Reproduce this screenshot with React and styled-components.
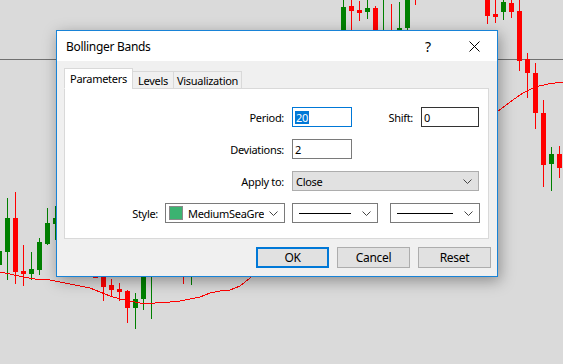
import React from "react";
import styled, { createGlobalStyle } from "styled-components";

const GlobalStyle = createGlobalStyle`
  body {
    margin: 0;
    background: #dadada;
    font-family: "Noto Sans", "Open Sans", sans-serif;
  }
`;

const Desktop = styled.div`
  position: relative;
  width: 563px;
  height: 364px;
  overflow: hidden;
  background: #dadada;
`;

const Chart = styled.svg`
  display: block;
`;

const Dialog = styled.div`
  position: absolute;
  left: 56px;
  top: 30px;
  width: 442px;
  height: 247px;
  box-sizing: border-box;
  border: 1px solid #1883d7;
  background: #f0f0f0;
  box-shadow: 2px 4px 14px rgba(0, 0, 0, 0.35);
  display: flex;
  flex-direction: column;
  font-size: 11px;
  letter-spacing: -0.3px;
  color: #000;
`;

const TitleBar = styled.div`
  height: 30px;
  flex: none;
  background: #fff;
  display: flex;
  align-items: center;
  padding-left: 9px;
`;

const Title = styled.span`
  flex: 1;
  font-size: 12px;
`;

const TitleButton = styled.div`
  width: 46px;
  height: 30px;
  display: flex;
  align-items: center;
  justify-content: center;
  font-size: 14px;
`;

const Client = styled.div`
  flex: 1;
  padding: 7px 6px 0 7px;
  display: flex;
  flex-direction: column;
`;

const TabStrip = styled.div`
  display: flex;
  align-items: flex-end;
  height: 21px;
  margin-bottom: -1px;
  position: relative;
  z-index: 1;
`;

const Tab = styled.div`
  box-sizing: border-box;
  height: ${(p) => (p.$active ? 21 : 18)}px;
  width: ${(p) => p.$w}px;
  margin-left: ${(p) => (p.$first ? 0 : -1)}px;
  border: 1px solid #d9d9d9;
  border-bottom-color: ${(p) => (p.$active ? "#fff" : "#d9d9d9")};
  background: ${(p) => (p.$active ? "#fff" : "#f0f0f0")};
  display: flex;
  align-items: center;
  justify-content: center;
  padding-top: ${(p) => (p.$active ? 0 : 1)}px;
`;

const Panel = styled.div`
  box-sizing: border-box;
  width: 425px;
  height: 151px;
  background: #fff;
  border: 1px solid #d9d9d9;
  padding-top: 18px;
  display: flex;
  flex-direction: column;
  gap: 12px;
`;

const Row = styled.div`
  display: flex;
  align-items: center;
  height: 20px;
  gap: ${(p) => p.$gap || 8}px;
`;

const Label = styled.div`
  width: ${(p) => p.$w}px;
  text-align: right;
  white-space: nowrap;
`;

const Field = styled.div`
  box-sizing: border-box;
  width: ${(p) => p.$w}px;
  height: 20px;
  border: 1px solid ${(p) => p.$border || "#7a7a7a"};
  background: #fff;
  display: flex;
  align-items: center;
  padding: 0 2px;
`;

const Selected = styled.span`
  background: #0078d7;
  color: #fff;
  line-height: 13px;
  padding: 0 1px;
`;

const Combo = styled.div`
  box-sizing: border-box;
  width: ${(p) => p.$w}px;
  height: 20px;
  margin-left: ${(p) => p.$ml || 0}px;
  border: 1px solid ${(p) => (p.$flat ? "#adadad" : "#7a7a7a")};
  background: ${(p) => (p.$flat ? "#e1e1e1" : "#fff")};
  display: flex;
  align-items: center;
  padding: 0 6px 0 3px;
  gap: 5px;
`;

const ComboText = styled.span`
  flex: 1;
  white-space: nowrap;
  overflow: hidden;
`;

const Swatch = styled.span`
  box-sizing: border-box;
  width: 14px;
  height: 14px;
  flex: none;
  background: #3cb371;
  border: 1px solid #8a8a8a;
`;

const LineSample = styled.span`
  flex: 1;
  height: 1px;
  background: #000;
  margin: 0 6px 0 3px;
`;

const ButtonRow = styled.div`
  display: flex;
  justify-content: flex-end;
  gap: 8px;
  margin-top: 8px;
`;

const Button = styled.div`
  box-sizing: border-box;
  width: 73px;
  height: 21px;
  border: ${(p) => (p.$default ? "2px solid #0078d7" : "1px solid #adadad")};
  background: #e1e1e1;
  display: flex;
  align-items: center;
  justify-content: center;
  font-size: 12px;
`;

const Chevron = () => (
  <svg width="9" height="5" viewBox="0 0 9 5">
    <polyline points="0.5,0.5 4.5,4.5 8.5,0.5" fill="none" stroke="#444" strokeWidth="1" />
  </svg>
);

const CloseIcon = () => (
  <svg width="11" height="11" viewBox="0 0 11 11">
    <path d="M0.5 0.5 L10.5 10.5 M10.5 0.5 L0.5 10.5" stroke="#000" strokeWidth="1" />
  </svg>
);

// left, wickTop, wickBottom, bodyTop, bodyBottom, up
const candles = [
  [341, 0, 30, 7, 30, 1],
  [349, 0, 30, 6, 11, 0],
  [357, 1, 21, 10, 13, 0],
  [365, 0, 19, 8, 12, 1],
  [373, 6, 30, 8, 30, 0],
  [381, 0, 30, null, null, 1],
  [389, 4, 30, null, null, 0],
  [397, 2, 30, 28, 30, 1],
  [405, 0, 30, 0, 28, 1],
  [413, 0, 5, null, null, 0],
  [485, 0, 24, 0, 16, 0],
  [493, 0, 23, 14, 17, 0],
  [501, 0, 20, 2, 12, 1],
  [509, 0, 18, 3, 12, 0],
  [517, 0, 71, 11, 61, 0],
  [525, 53, 98, 59, 73, 0],
  [533, 63, 129, 73, 113, 0],
  [541, 100, 187, 113, 165, 0],
  [549, 147, 191, 154, 164, 1],
  [557, 146, 178, 154, 168, 0],
  [-3, 240, 270, 251, 265, 1],
  [5, 198, 280, 218, 252, 1],
  [13, 192, 284, 218, 272, 0],
  [21, 245, 286, 271, 274, 0],
  [29, 252, 280, 269, 274, 1],
  [37, 238, 275, 242, 270, 1],
  [45, 208, 245, 223, 244, 1],
  [53, 206, 240, 218, 224, 1],
  [93, 270, 278, 270, 278, 0],
  [101, 270, 301, 270, 287, 0],
  [109, 279, 297, 285, 290, 0],
  [117, 283, 301, 289, 292, 0],
  [125, 290, 323, 291, 308, 0],
  [133, 293, 329, 299, 308, 1],
  [141, 270, 310, 270, 299, 1],
  [149, 270, 319, null, null, 1],
  [181, 270, 284, null, null, 0],
  [189, 270, 285, null, null, 1],
];

const maPoints =
  "0,272 10,274 23,277 35,279 50,280 60,282 70,284 80,286 90,288 100,292 110,296 120,299 130,301 140,303 150,304 160,302 170,302 180,301 190,299 200,297 210,293 220,291 230,290 240,286 250,278 260,270 497,112 510,102 523,93 535,87 548,84 563,82";

function PriceChart() {
  return (
    <Chart width="563" height="364" viewBox="0 0 563 364" shapeRendering="crispEdges">
      <rect x="0" y="59" width="563" height="1" fill="#707070" />
      {candles.map(([x, wt, wb, bt, bb, up], i) => {
        const color = up ? "#008000" : "#ff0000";
        return (
          <g key={i} fill={color}>
            <rect x={x + 2} y={wt} width="1" height={wb - wt} />
            {bt !== null && <rect x={x} y={bt} width="5" height={Math.max(1, bb - bt)} />}
          </g>
        );
      })}
      <polyline points={maPoints} fill="none" stroke="#ff0000" strokeWidth="1" />
    </Chart>
  );
}

export default function App() {
  return (
    <>
      <GlobalStyle />
      <Desktop>
        <PriceChart />
        <Dialog>
          <TitleBar>
            <Title>Bollinger Bands</Title>
            <TitleButton>?</TitleButton>
            <TitleButton>
              <CloseIcon />
            </TitleButton>
          </TitleBar>
          <Client>
            <TabStrip>
              <Tab $active $first $w={69}>Parameters</Tab>
              <Tab $w={42}>Levels</Tab>
              <Tab $w={69}>Visualization</Tab>
            </TabStrip>
            <Panel>
              <Row>
                <Label $w={219}>Period:</Label>
                <Field $w={60} $border="#0078d7">
                  <Selected>20</Selected>
                </Field>
                <Label $w={53}>Shift:</Label>
                <Field $w={58} $border="#333">0</Field>
              </Row>
              <Row>
                <Label $w={219}>Deviations:</Label>
                <Field $w={60}>2</Field>
              </Row>
              <Row>
                <Label $w={219}>Apply to:</Label>
                <Combo $w={187} $flat>
                  <ComboText>Close</ComboText>
                  <Chevron />
                </Combo>
              </Row>
              <Row $gap={7}>
                <Label $w={93}>Style:</Label>
                <Combo $w={120}>
                  <Swatch />
                  <ComboText>MediumSeaGre</ComboText>
                  <Chevron />
                </Combo>
                <Combo $w={86}>
                  <LineSample />
                  <Chevron />
                </Combo>
                <Combo $w={90} $ml={5}>
                  <LineSample />
                  <Chevron />
                </Combo>
              </Row>
            </Panel>
            <ButtonRow>
              <Button $default>OK</Button>
              <Button>Cancel</Button>
              <Button>Reset</Button>
            </ButtonRow>
          </Client>
        </Dialog>
      </Desktop>
    </>
  );
}
